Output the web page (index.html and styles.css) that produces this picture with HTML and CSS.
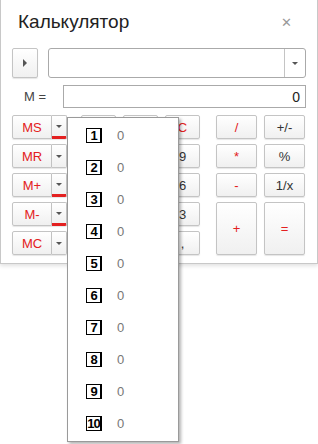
FILE: index.html
```html
<!DOCTYPE html>
<html lang="ru">
<head>
  <meta charset="UTF-8" />
  <title>Калькулятор</title>
  <link rel="stylesheet" href="styles.css">
</head>
<body>
<div class="window">
  <header class="titlebar">
    <h1>Калькулятор</h1>
    <span class="close">&#x2715;</span>
  </header>

  <div class="row history">
    <button class="btn expand"><span class="tri-right"></span></button>
    <div class="combo">
      <span class="field"></span>
      <span class="drop"><span class="tri-down"></span></span>
    </div>
  </div>

  <div class="row memory">
    <label>M =</label>
    <div class="field value">0</div>
  </div>

  <div class="keys">
    <div class="mem-col">
      <div class="split"><button class="btn red">MS</button><button class="btn arrow marked"><span class="tri-down"></span></button></div>
      <div class="split"><button class="btn red">MR</button><button class="btn arrow"><span class="tri-down"></span></button></div>
      <div class="split"><button class="btn red">M+</button><button class="btn arrow marked"><span class="tri-down"></span></button></div>
      <div class="split"><button class="btn red">M-</button><button class="btn arrow marked"><span class="tri-down"></span></button></div>
      <div class="split"><button class="btn red">MC</button><button class="btn arrow"><span class="tri-down"></span></button></div>
    </div>
    <div class="digits">
      <button class="btn red">&larr;</button>
      <button class="btn red">CE</button>
      <button class="btn red">C</button>
      <button class="btn">7</button>
      <button class="btn">8</button>
      <button class="btn">9</button>
      <button class="btn">4</button>
      <button class="btn">5</button>
      <button class="btn">6</button>
      <button class="btn">1</button>
      <button class="btn">2</button>
      <button class="btn">3</button>
      <button class="btn wide">0</button>
      <button class="btn">,</button>
    </div>
    <div class="ops">
      <button class="btn red">/</button>
      <button class="btn">+/-</button>
      <button class="btn red">*</button>
      <button class="btn">%</button>
      <button class="btn red">-</button>
      <button class="btn">1/x</button>
      <button class="btn red tall">+</button>
      <button class="btn red tall">=</button>
    </div>
  </div>
</div>

<ul class="mem-menu">
  <li><span class="slot">1</span><span class="val">0</span></li>
  <li><span class="slot">2</span><span class="val">0</span></li>
  <li><span class="slot">3</span><span class="val">0</span></li>
  <li><span class="slot">4</span><span class="val">0</span></li>
  <li><span class="slot">5</span><span class="val">0</span></li>
  <li><span class="slot">6</span><span class="val">0</span></li>
  <li><span class="slot">7</span><span class="val">0</span></li>
  <li><span class="slot">8</span><span class="val">0</span></li>
  <li><span class="slot">9</span><span class="val">0</span></li>
  <li><span class="slot">10</span><span class="val">0</span></li>
</ul>
</body>
</html>
```

FILE: styles.css
```css
html {
  background: #fff;
}
body {
  margin: 0;
  min-height: 444px;
  background: #fff;
  font-family: Arial, "Liberation Sans", Helvetica, sans-serif;
  font-size: 13px;
  color: #333;
  position: relative;
}

.window {
  width: 318px;
  box-sizing: border-box;
  border: 1px solid #c8c8c8;
  border-top: none;
  padding: 0 11px 8px 11px;
  box-shadow: 0 2px 4px rgba(0, 0, 0, 0.12);
}

.titlebar {
  display: flex;
  justify-content: space-between;
  align-items: center;
  height: 44px;
  padding: 0 14px 0 6px;
  margin-bottom: 4px;
}
h1 {
  margin: 0;
  font-weight: normal;
  font-size: 19px;
  color: #222;
}
.close {
  color: #999;
  font-size: 13px;
}

.row {
  display: flex;
  align-items: center;
}
.history {
  gap: 10px;
  height: 30px;
}
.memory {
  margin-top: 7px;
  height: 23px;
}
.memory label {
  width: 51px;
  padding-left: 12px;
  box-sizing: border-box;
  color: #444;
}

.btn {
  font-family: inherit;
  font-size: 13px;
  color: #333;
  margin: 0;
  padding: 0;
  border: 1px solid #c4c4c4;
  border-radius: 2px;
  background: linear-gradient(#ffffff, #f0f0f0);
  box-shadow: 0 1px 1px rgba(0, 0, 0, 0.1);
  display: flex;
  align-items: center;
  justify-content: center;
}
.btn.red {
  color: #e32020;
}
.expand {
  width: 26px;
  height: 30px;
}
.tri-right {
  border-left: 4px solid #555;
  border-top: 4px solid transparent;
  border-bottom: 4px solid transparent;
}
.tri-down {
  border-top: 3px solid #555;
  border-left: 3px solid transparent;
  border-right: 3px solid transparent;
}

.combo {
  flex: 1;
  display: flex;
  height: 30px;
  box-sizing: border-box;
  border: 1px solid #aaa;
  border-radius: 3px;
  background: #fff;
}
.combo .field {
  flex: 1;
}
.combo .drop {
  width: 20px;
  border-left: 1px solid #c4c4c4;
  display: flex;
  align-items: center;
  justify-content: center;
}

.memory .value {
  flex: 1;
  height: 23px;
  box-sizing: border-box;
  border: 1px solid #aaa;
  background: #fff;
  text-align: right;
  padding: 3px 5px 0 0;
  font-size: 14px;
  color: #222;
}

.keys {
  display: flex;
  margin-top: 7px;
}
.mem-col {
  display: flex;
  flex-direction: column;
  gap: 5px;
  margin-right: 14px;
}
.split {
  display: flex;
  height: 24px;
}
.split .btn {
  width: 40px;
  border-radius: 2px 0 0 2px;
}
.split .arrow {
  width: 15px;
  border-left: none;
  border-radius: 0 2px 2px 0;
}
.split .arrow.marked {
  border-bottom: 3px solid #e32020;
}

.digits,
.ops {
  display: grid;
  grid-auto-rows: 24px;
  gap: 5px 7px;
}
.digits {
  grid-template-columns: repeat(3, 35px);
  margin-right: 16px;
}
.ops {
  grid-template-columns: repeat(2, 41px);
}
.wide {
  grid-column: span 2;
}
.tall {
  grid-row: span 2;
}

.mem-menu {
  position: absolute;
  left: 67px;
  top: 117px;
  width: 112px;
  height: 325px;
  box-sizing: border-box;
  margin: 0;
  padding: 1px 0 0 18px;
  list-style: none;
  background: #fff;
  border: 1px solid #9a9a9a;
  box-shadow: 2px 2px 3px rgba(0, 0, 0, 0.3);
  z-index: 2;
}
.mem-menu li {
  display: flex;
  align-items: center;
  height: 32px;
}
.slot {
  width: 16px;
  height: 15px;
  box-sizing: border-box;
  border: 1px solid #000;
  border-right-width: 2px;
  font-weight: bold;
  font-size: 13px;
  line-height: 13px;
  text-align: center;
  color: #000;
  letter-spacing: -1px;
  margin-right: 15px;
}
.val {
  color: #777;
  font-size: 13px;
}
```
